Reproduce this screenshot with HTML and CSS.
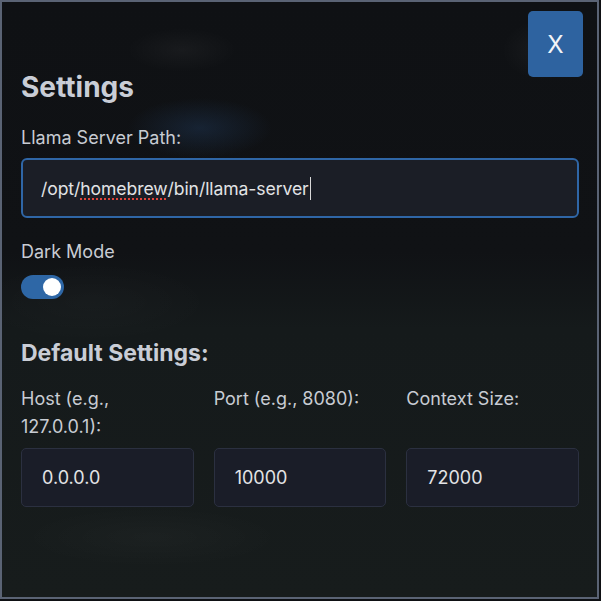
FILE: index.html
```html
<!DOCTYPE html>
<html lang="en">
<head>
<meta charset="utf-8">
<title>Settings</title>
<link rel="stylesheet" href="styles.css">
</head>
<body>
<div class="modal">
  <button class="close" type="button">X</button>
  <h2 class="title">Settings</h2>
  <label class="label label-path">Llama Server Path:</label>
  <div class="path-input"><span>/opt/</span><span class="misspelled">homebrew</span><span>/bin/llama-server</span><span class="caret"></span></div>
  <label class="label label-dark">Dark Mode</label>
  <div class="toggle"><span class="knob"></span></div>
  <h3 class="subtitle">Default Settings:</h3>
  <div class="grid">
    <div class="col">
      <label class="label col-label">Host (e.g., 127.0.0.1):</label>
      <div class="num-input">0.0.0.0</div>
    </div>
    <div class="col">
      <label class="label col-label">Port (e.g., 8080):</label>
      <div class="num-input">10000</div>
    </div>
    <div class="col">
      <label class="label col-label">Context Size:</label>
      <div class="num-input">72000</div>
    </div>
  </div>
</div>
</body>
</html>
```
FILE: styles.css
```css
html, body {
  margin: 0;
  padding: 0;
  background: #0e1013;
}
body {
  font-family: Inter, "Noto Sans", "Liberation Sans", sans-serif;
  color: #c8ccd3;
}
.modal {
  position: relative;
  box-sizing: border-box;
  width: 599px;
  height: 599px;
  border: 2px solid #5a6374;
  padding: 68px 18px 0 19px;
  display: flex;
  flex-direction: column;
  background:
    radial-gradient(ellipse 72px 30px at 198px 126px, rgba(38, 72, 116, 0.32), rgba(38, 72, 116, 0) 100%),
    radial-gradient(ellipse 55px 22px at 180px 48px, rgba(255, 255, 255, 0.04), rgba(255, 255, 255, 0) 100%),
    radial-gradient(ellipse 40px 30px at 540px 48px, rgba(255, 255, 255, 0.045), rgba(255, 255, 255, 0) 100%),
    radial-gradient(ellipse 120px 40px at 90px 300px, rgba(255, 255, 255, 0.02), rgba(255, 255, 255, 0) 100%),
    radial-gradient(ellipse 130px 30px at 150px 535px, rgba(255, 255, 255, 0.022), rgba(255, 255, 255, 0) 100%),
    linear-gradient(#0f1114 0%, #101215 42%, #151a1b 55%, #171c1c 100%);
}
.close {
  position: absolute;
  top: 9px;
  right: 14px;
  width: 55px;
  height: 66px;
  border: none;
  border-radius: 5px;
  background: #2e63a0;
  color: #f2f4f7;
  font-family: Inter, "Noto Sans", "Liberation Sans", sans-serif;
  font-size: 24px;
  font-weight: 400;
  padding: 0;
}
.title {
  margin: 0;
  font-size: 28px;
  line-height: 34px;
  font-weight: 700;
  color: #c9cdd6;
}
.label {
  display: block;
  font-size: 18px;
  line-height: 27px;
  color: #c8ccd3;
}
.label-path {
  margin-top: 20px;
}
.path-input {
  box-sizing: border-box;
  margin-top: 7px;
  height: 60px;
  border: 2px solid #2f66a6;
  border-radius: 6px;
  background: #1b1e26;
  padding: 0 18px;
  display: flex;
  align-items: center;
  font-size: 17.6px;
  letter-spacing: -0.1px;
  color: #e2e3e5;
  white-space: pre;
}
.misspelled {
  text-decoration-line: underline;
  text-decoration-style: dotted;
  text-decoration-color: #e0443a;
  text-decoration-thickness: 2px;
  text-underline-offset: 4px;
}
.caret {
  display: inline-block;
  width: 1px;
  height: 23px;
  background: #d8d8d8;
  margin-left: 1px;
}
.label-dark {
  margin-top: 20px;
}
.toggle {
  position: relative;
  margin-top: 10px;
  width: 43px;
  height: 24px;
  border-radius: 12px;
  background: #2e67a6;
}
.knob {
  position: absolute;
  top: 3px;
  right: 3px;
  width: 18px;
  height: 18px;
  border-radius: 50%;
  background: #ffffff;
}
.subtitle {
  margin: 40px 0 0 0;
  font-size: 23px;
  line-height: 28px;
  font-weight: 700;
  color: #c9cdd6;
}
.grid {
  margin-top: 18px;
  display: grid;
  grid-template-columns: repeat(3, 1fr);
  column-gap: 20px;
}
.col {
  display: flex;
  flex-direction: column;
}
.col-label {
  line-height: 28px;
  height: 56px;
}
.num-input {
  box-sizing: border-box;
  margin-top: 7px;
  height: 59px;
  border: 1px solid #2b3040;
  border-radius: 5px;
  background: #1a1d28;
  padding: 0 20px;
  display: flex;
  align-items: center;
  font-size: 18px;
  color: #e2e3e5;
}
```
